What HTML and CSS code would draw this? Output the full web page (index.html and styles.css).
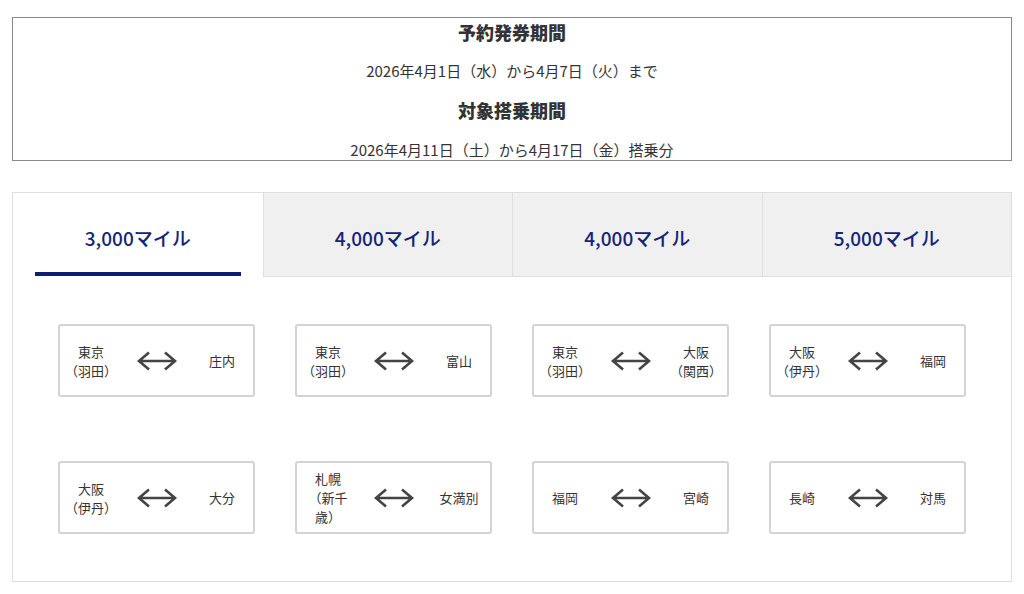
FILE: index.html
```html
<!DOCTYPE html>
<html lang="ja">
<head>
<meta charset="utf-8">
<title>マイル</title>
<link rel="stylesheet" href="styles.css">
</head>
<body>
<div class="wrap">
  <section class="period">
    <h2 class="period-title">予約発券期間</h2>
    <p class="period-text">2026年4月1日（水）から4月7日（火）まで</p>
    <h2 class="period-title">対象搭乗期間</h2>
    <p class="period-text last">2026年4月11日（土）から4月17日（金）搭乗分</p>
  </section>

  <section class="panel">
    <div class="tabs">
      <div class="tab active">3,000マイル</div>
      <div class="tab">4,000マイル</div>
      <div class="tab">4,000マイル</div>
      <div class="tab">5,000マイル</div>
    </div>
    <div class="routes">
      <div class="card"><div class="city">東京<br>（羽田）</div><svg class="arrow" viewBox="0 0 42 20"><path d="M13 1.5 L3 10 L13 18.5 M3 10 H39 M29 1.5 L39 10 L29 18.5"/></svg><div class="city">庄内</div></div>
      <div class="card"><div class="city">東京<br>（羽田）</div><svg class="arrow" viewBox="0 0 42 20"><path d="M13 1.5 L3 10 L13 18.5 M3 10 H39 M29 1.5 L39 10 L29 18.5"/></svg><div class="city">富山</div></div>
      <div class="card"><div class="city">東京<br>（羽田）</div><svg class="arrow" viewBox="0 0 42 20"><path d="M13 1.5 L3 10 L13 18.5 M3 10 H39 M29 1.5 L39 10 L29 18.5"/></svg><div class="city">大阪<br>（関西）</div></div>
      <div class="card"><div class="city">大阪<br>（伊丹）</div><svg class="arrow" viewBox="0 0 42 20"><path d="M13 1.5 L3 10 L13 18.5 M3 10 H39 M29 1.5 L39 10 L29 18.5"/></svg><div class="city">福岡</div></div>
      <div class="card"><div class="city">大阪<br>（伊丹）</div><svg class="arrow" viewBox="0 0 42 20"><path d="M13 1.5 L3 10 L13 18.5 M3 10 H39 M29 1.5 L39 10 L29 18.5"/></svg><div class="city">大分</div></div>
      <div class="card"><div class="city">札幌<br>（新千<br>歳）</div><svg class="arrow" viewBox="0 0 42 20"><path d="M13 1.5 L3 10 L13 18.5 M3 10 H39 M29 1.5 L39 10 L29 18.5"/></svg><div class="city">女満別</div></div>
      <div class="card"><div class="city">福岡</div><svg class="arrow" viewBox="0 0 42 20"><path d="M13 1.5 L3 10 L13 18.5 M3 10 H39 M29 1.5 L39 10 L29 18.5"/></svg><div class="city">宮崎</div></div>
      <div class="card"><div class="city">長崎</div><svg class="arrow" viewBox="0 0 42 20"><path d="M13 1.5 L3 10 L13 18.5 M3 10 H39 M29 1.5 L39 10 L29 18.5"/></svg><div class="city">対馬</div></div>
    </div>
  </section>
</div>
</body>
</html>
```

FILE: styles.css
```css
* { box-sizing: border-box; }

html, body {
  margin: 0;
  padding: 0;
  background: #fff;
}

body {
  font-family: "Noto Sans CJK JP", "Noto Sans", sans-serif;
  color: #333;
}

.wrap {
  width: 1000px;
  margin-left: 12px;
  padding-top: 17px;
}

.period {
  border: 1px solid #8a8a8a;
  height: 144px;
  text-align: center;
}

.period-title {
  margin: 0;
  font-size: 18px;
  font-weight: 900;
  line-height: 28px;
  color: #333;
}

.period-text {
  margin: 11px 0;
  font-size: 15px;
  line-height: 28px;
  color: #333;
}

.period-text.last {
  margin: 16px 0 0;
  line-height: 20px;
}

.panel {
  margin-top: 31px;
  border: 1px solid #dedede;
}

.tabs {
  display: grid;
  grid-template-columns: repeat(4, 1fr);
}

.tab {
  position: relative;
  height: 84px;
  display: flex;
  align-items: center;
  justify-content: center;
  padding-top: 6px;
  font-size: 19px;
  font-weight: 500;
  color: #142479;
  background: #f0f0f0;
  border-left: 1px solid #dedede;
  border-bottom: 1px solid #dedede;
}

.tab.active {
  background: #fff;
  border-left: none;
  border-bottom: 1px solid #fff;
}

.tab.active::after {
  content: "";
  position: absolute;
  left: 22px;
  right: 22px;
  bottom: 0;
  height: 4px;
  background: #0d1f72;
}

.routes {
  display: grid;
  grid-template-columns: repeat(4, 197px);
  column-gap: 40px;
  row-gap: 64px;
  padding: 47px 45px 47px 45px;
}

.card {
  height: 73px;
  border: 2px solid #d3d3d3;
  border-radius: 3px;
  padding: 0 2px;
  display: grid;
  grid-template-columns: 58px 1fr 58px;
  align-items: center;
}

.city {
  font-size: 13px;
  line-height: 19px;
  text-align: center;
  color: #333;
}

.arrow {
  justify-self: center;
  width: 42px;
  height: 20px;
  fill: none;
  stroke: #444;
  stroke-width: 2.6;
  stroke-linejoin: miter;
}
```
